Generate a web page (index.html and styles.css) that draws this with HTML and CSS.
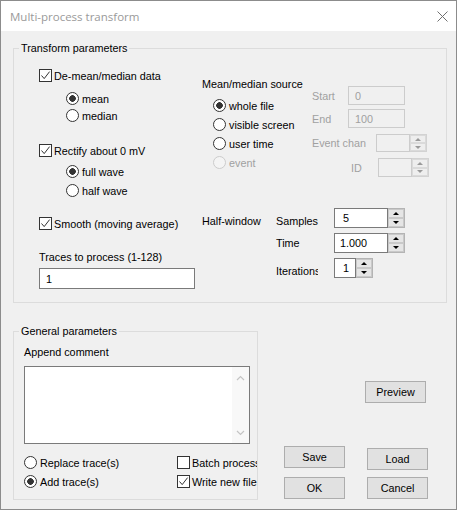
FILE: index.html
```html
<!DOCTYPE html>
<html>
<head>
<meta charset="utf-8">
<link rel="stylesheet" href="styles.css">
</head>
<body>
<div class="window">
  <div class="titlebar">
    <span class="title">Multi-process transform</span>
    <svg class="close" width="11" height="11" viewBox="0 0 11 11"><path d="M0.5 0.5 L10.5 10.5 M10.5 0.5 L0.5 10.5" stroke="#707070" stroke-width="1" fill="none"/></svg>
  </div>
  <div class="body">
    <div class="group group-transform">
      <span class="legend">Transform parameters</span>
      <div class="col-left">
        <div class="row r-demean"><span class="cb"><svg width="11" height="11" viewBox="0 0 11 11"><path d="M1.5 5.5 L4.2 8.6 L9.6 1.6" stroke="#333" stroke-width="1" fill="none"/></svg></span>De-mean/median data</div>
        <div class="row ind r-mean"><span class="rb on"></span>mean</div>
        <div class="row ind"><span class="rb"></span>median</div>
        <div class="row r-rectify"><span class="cb"><svg width="11" height="11" viewBox="0 0 11 11"><path d="M1.5 5.5 L4.2 8.6 L9.6 1.6" stroke="#333" stroke-width="1" fill="none"/></svg></span>Rectify about 0 mV</div>
        <div class="row ind r-full"><span class="rb on"></span>full wave</div>
        <div class="row ind r-half"><span class="rb"></span>half wave</div>
        <div class="row r-smooth"><span class="cb"><svg width="11" height="11" viewBox="0 0 11 11"><path d="M1.5 5.5 L4.2 8.6 L9.6 1.6" stroke="#333" stroke-width="1" fill="none"/></svg></span>Smooth (moving average)</div>
        <div class="row r-traces">Traces to process (1-128)</div>
        <div class="textbox traces-box">1</div>
      </div>
      <div class="col-right">
        <div class="source">
          <div class="source-a">
            <div class="row r-srctitle">Mean/median source</div>
            <div class="src-radios">
              <div class="row19"><span class="rb on"></span>whole file</div>
              <div class="row19"><span class="rb"></span>visible screen</div>
              <div class="row19"><span class="rb"></span>user time</div>
              <div class="row19 dis"><span class="rb rb-dis"></span>event</div>
            </div>
          </div>
          <div class="source-b">
            <div class="frow"><span class="flabel w36">Start</span><span class="dbox">0</span></div>
            <div class="frow r-end"><span class="flabel w36">End</span><span class="dbox">100</span></div>
            <div class="frow r-evchan"><span class="flabel w64">Event chan</span>
              <span class="spin spin-dis w51"><span class="spin-text"></span><span class="spin-btns"><span class="sb"><i class="up"></i></span><span class="sb"><i class="down"></i></span></span></span>
            </div>
            <div class="frow r-id"><span class="flabel w66 idlabel">ID</span>
              <span class="spin spin-dis w51"><span class="spin-text"></span><span class="spin-btns"><span class="sb"><i class="up"></i></span><span class="sb"><i class="down"></i></span></span></span>
            </div>
          </div>
        </div>
        <div class="halfwin">
          <span class="hw-label">Half-window</span>
          <span class="hw-name al-end">Samples</span>
          <span class="spin w71"><span class="spin-text pad8">5</span><span class="spin-btns"><span class="sb"><i class="up"></i></span><span class="sb"><i class="down"></i></span></span></span>
          <span class="hw-name hw-c2">Time</span>
          <span class="spin w71"><span class="spin-text pad5">1.000</span><span class="spin-btns"><span class="sb"><i class="up"></i></span><span class="sb"><i class="down"></i></span></span></span>
          <span class="hw-name hw-c2 al-end"><span class="clip-it">Iterations</span></span>
          <span class="spin w39"><span class="spin-text pad8">1</span><span class="spin-btns"><span class="sb"><i class="up"></i></span><span class="sb"><i class="down"></i></span></span></span>
        </div>
      </div>
    </div>
    <div class="lower">
      <div class="group group-general">
        <span class="legend">General parameters</span>
        <div class="row r-append">Append comment</div>
        <div class="memo">
          <div class="memo-text"></div>
          <div class="memo-scroll">
            <svg width="9" height="6" viewBox="0 0 9 6"><path d="M1 5 L4.5 1.5 L8 5" stroke="#c4c4c4" stroke-width="1.2" fill="none"/></svg>
            <svg width="9" height="6" viewBox="0 0 9 6"><path d="M1 1 L4.5 4.5 L8 1" stroke="#c4c4c4" stroke-width="1.2" fill="none"/></svg>
          </div>
        </div>
        <div class="opts">
          <div class="opts-left">
            <div class="row"><span class="rb"></span>Replace trace(s)</div>
            <div class="row r-add"><span class="rb on"></span>Add trace(s)</div>
          </div>
          <div class="opts-right">
            <div class="row"><span class="cb"></span>Batch process</div>
            <div class="row r-add"><span class="cb"><svg width="11" height="11" viewBox="0 0 11 11"><path d="M1.5 5.5 L4.2 8.6 L9.6 1.6" stroke="#333" stroke-width="1" fill="none"/></svg></span>Write new file</div>
          </div>
        </div>
      </div>
      <div class="actions">
        <div class="btn btn-preview">Preview</div>
        <div class="btn-grid">
          <div class="btn">Save</div>
          <div class="btn btn-load">Load</div>
          <div class="btn">OK</div>
          <div class="btn">Cancel</div>
        </div>
      </div>
    </div>
  </div>
</div>
</body>
</html>
```
FILE: styles.css
```css
html { background: #ffffff; }
body {
  margin: 0;
  font-family: "Liberation Sans", Arial, sans-serif;
  font-size: 10.8px;
  color: #000;
}
.window {
  width: 457px;
  height: 510px;
  box-sizing: border-box;
  border: 1px solid #8c8c8c;
  display: flex;
  flex-direction: column;
  background: #f0f0f0;
}
.titlebar {
  height: 30px;
  flex: none;
  background: #fff;
  display: flex;
  align-items: center;
  justify-content: space-between;
  padding: 0 8px 0 9px;
}
.title {
  font-family: "Open Sans", "Noto Sans", sans-serif;
  font-size: 11.5px;
  color: #9a9a9a;
  line-height: 16px;
  padding-top: 1px;
}
.close { display: block; }
.body {
  flex: 1;
  padding: 17px 10px 0 12px;
}
.group {
  position: relative;
  border: 1px solid #dcdcdc;
  box-sizing: border-box;
}
.legend {
  position: absolute;
  top: -7px;
  left: 5px;
  padding: 0 2px;
  line-height: 13px;
  background: #f0f0f0;
  white-space: nowrap;
}
.group-transform {
  width: 434px;
  height: 255px;
  display: flex;
  padding-left: 25px;
}
.col-left {
  width: 163px;
  display: flex;
  flex-direction: column;
}
.row {
  display: flex;
  align-items: center;
  height: 17px;
  white-space: nowrap;
}
.row19 {
  display: flex;
  align-items: center;
  height: 19px;
  white-space: nowrap;
}
.ind { padding-left: 27px; }
.r-demean { margin-top: 18px; }
.r-mean { margin-top: 6px; }
.r-rectify { margin-top: 18px; }
.r-full { margin-top: 4px; }
.r-half { margin-top: 2px; }
.r-smooth { margin-top: 16px; }
.r-traces { margin-top: 16px; }
.cb {
  width: 13px;
  height: 13px;
  box-sizing: border-box;
  border: 1px solid #333;
  background: #fff;
  margin-right: 2px;
  flex: none;
  display: flex;
  align-items: center;
  justify-content: center;
}
.cb svg { display: block; }
.rb {
  width: 13px;
  height: 13px;
  box-sizing: border-box;
  border: 1px solid #333;
  border-radius: 50%;
  background: #fff;
  margin-right: 3px;
  flex: none;
}
.rb.on {
  background: radial-gradient(circle, #333 0, #333 3px, #fff 3.6px);
}
.rb-dis {
  border-color: #cccccc;
  background: #f4f4f4;
}
.dis { color: #a0a0a0; }
.textbox {
  width: 156px;
  height: 21px;
  box-sizing: border-box;
  border: 1px solid #7a7a7a;
  background: #fff;
  padding-left: 6px;
  display: flex;
  align-items: center;
}
.traces-box { margin-top: 3px; }
.col-right {
  display: flex;
  flex-direction: column;
}
.source { display: flex; }
.source-a { width: 110px; }
.r-srctitle { margin-top: 26px; }
.src-radios {
  margin-top: 4px;
  padding-left: 11px;
}
.source-b {
  margin-top: 37px;
  display: flex;
  flex-direction: column;
}
.frow {
  display: flex;
  align-items: center;
  height: 19px;
}
.r-end { margin-top: 4px; }
.r-evchan { margin-top: 6px; height: 18px; }
.r-id { margin-top: 6px; }
.flabel { color: #a0a0a0; white-space: nowrap; }
.w36 { width: 36px; }
.w64 { width: 64px; }
.w66 { width: 66px; }
.idlabel { padding-left: 39px; box-sizing: border-box; }
.dbox {
  width: 57px;
  height: 19px;
  box-sizing: border-box;
  border: 1px solid #cccccc;
  background: #f0f0f0;
  color: #a0a0a0;
  padding-left: 6px;
  display: flex;
  align-items: center;
}
.spin {
  display: flex;
  height: 20px;
  box-sizing: border-box;
}
.r-evchan .spin { height: 18px; }
.r-id .spin { height: 19px; }
.w51 { width: 51px; }
.w71 { width: 71px; }
.w39 { width: 39px; }
.spin-text {
  flex: 1;
  border: 1px solid #7a7a7a;
  background: #fff;
  display: flex;
  align-items: center;
}
.pad8 { padding-left: 8px; }
.pad5 { padding-left: 5px; }
.spin-btns {
  width: 17px;
  flex: none;
  box-sizing: border-box;
  border: 1px solid #b4b4b4;
  border-left: none;
  display: flex;
  flex-direction: column;
  background: #fff;
}
.sb {
  flex: 1;
  background: #e5e5e5;
  border: 1px solid #c9c9c9;
  display: flex;
  align-items: center;
  justify-content: center;
}
.up {
  width: 0;
  height: 0;
  border-left: 3px solid transparent;
  border-right: 3px solid transparent;
  border-bottom: 3px solid #000;
}
.down {
  width: 0;
  height: 0;
  border-left: 3px solid transparent;
  border-right: 3px solid transparent;
  border-top: 3px solid #000;
}
.spin-dis .spin-text {
  border-color: #cccccc;
  background: #f0f0f0;
}
.spin-dis .spin-btns { border-color: #d2d2d2; }
.spin-dis .sb { background: #eeeeee; border-color: #dadada; }
.spin-dis .up { border-bottom-color: #9a9a9a; }
.spin-dis .down { border-top-color: #9a9a9a; }
.halfwin {
  margin-top: 31px;
  display: grid;
  grid-template-columns: 74px 58px auto;
  grid-auto-rows: 20px;
  row-gap: 5px;
  line-height: 13px;
}
.hw-label { align-self: end; white-space: nowrap; }
.hw-name {
  align-self: center;
  white-space: nowrap;
}
.clip-it {
  display: block;
  width: 42px;
  overflow: hidden;
}
.al-end { align-self: end; }
.hw-c2 { grid-column: 2; }
.lower {
  display: flex;
  margin-top: 28px;
}
.group-general {
  width: 245px;
  height: 169px;
  padding-left: 10px;
}
.r-append { margin-top: 12px; height: 15px; }
.memo {
  margin-top: 7px;
  width: 226px;
  height: 78px;
  box-sizing: border-box;
  border: 1px solid #7a7a7a;
  background: #fff;
  display: flex;
}
.memo-text { flex: 1; }
.memo-scroll {
  width: 17px;
  background: #f8f8f8;
  display: flex;
  flex-direction: column;
  align-items: center;
  justify-content: space-between;
  padding: 8px 0 7px;
}
.memo-scroll svg { display: block; }
.opts {
  display: flex;
  margin-top: 10px;
}
.opts-left { width: 155px; }
.opts-right {
  width: 81px;
  overflow: hidden;
  background: #f0f0f0;
}
.r-add { margin-top: 2px; }
.actions {
  display: flex;
  flex-direction: column;
  align-items: flex-start;
}
.btn {
  width: 61px;
  height: 22px;
  box-sizing: border-box;
  border: 1px solid #adadad;
  background: #e1e1e1;
  display: flex;
  align-items: center;
  justify-content: center;
}
.btn-preview {
  margin-top: 50px;
  margin-left: 107px;
}
.btn-grid {
  margin-top: 43px;
  margin-left: 26px;
  display: grid;
  grid-template-columns: 61px 61px;
  column-gap: 22px;
  row-gap: 7px;
  align-items: start;
}
.btn-load { margin-top: 2px; }
```
